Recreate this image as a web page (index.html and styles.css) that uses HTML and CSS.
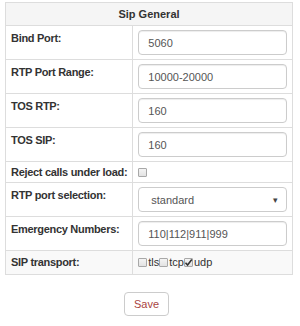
FILE: index.html
```html
<!DOCTYPE html>
<html lang="en">
<head>
  <meta charset="UTF-8">
  <meta name="viewport" content="width=device-width, initial-scale=1.0">
  <title>Sip General</title>
  <link rel="stylesheet" href="styles.css">
</head>
<body>
  <form class="sip-form">
    <table class="settings">
      <thead>
        <tr><th colspan="2">Sip General</th></tr>
      </thead>
      <tbody>
        <tr>
          <td class="label">Bind Port:</td>
          <td class="value"><input class="field" type="text" value="5060"></td>
        </tr>
        <tr>
          <td class="label">RTP Port Range:</td>
          <td class="value"><input class="field" type="text" value="10000-20000"></td>
        </tr>
        <tr>
          <td class="label">TOS RTP:</td>
          <td class="value"><input class="field" type="text" value="160"></td>
        </tr>
        <tr>
          <td class="label">TOS SIP:</td>
          <td class="value"><input class="field" type="text" value="160"></td>
        </tr>
        <tr class="short">
          <td class="label">Reject calls under load:</td>
          <td class="value"><span class="box"></span></td>
        </tr>
        <tr>
          <td class="label">RTP port selection:</td>
          <td class="value">
            <div class="select"><span>standard</span><span class="caret">&#9662;</span></div>
          </td>
        </tr>
        <tr>
          <td class="label">Emergency Numbers:</td>
          <td class="value"><input class="field" type="text" value="110|112|911|999"></td>
        </tr>
        <tr class="short shaded">
          <td class="label">SIP transport:</td>
          <td class="value transport">
            <span class="box"></span>tls<span class="box"></span>tcp<span class="box checked"><svg viewBox="0 0 9 9" width="9" height="9"><path d="M1.5 4.8 L3.6 7 L7.8 1.6" fill="none" stroke="#333" stroke-width="1.6"/></svg></span>udp
          </td>
        </tr>
      </tbody>
    </table>
    <div class="actions">
      <button type="button" class="save">Save</button>
    </div>
  </form>
</body>
</html>
```

FILE: styles.css
```css
html, body {
  margin: 0; padding: 0;
  background: #fff;
  font-family: "Liberation Sans", Arial, sans-serif;
  font-size: 11px;
  color: #333;
}
.sip-form {
  padding: 2px 7px 0 5px;
}
.settings {
  width: 288px;
  border-collapse: collapse;
  border: 1px solid #ddd;
}
.settings th {
  background: #f5f5f5;
  border: 1px solid #ddd;
  padding: 4px 5px;
  font-weight: bold;
  text-align: center;
  line-height: 14px;
}
.settings td {
  border: 1px solid #ddd;
  padding: 4px 5px;
  vertical-align: top;
}
.settings td.label {
  white-space: nowrap;
  font-weight: bold;
  letter-spacing: -0.3px;
  line-height: 14px;
  padding-top: 5px;
}
.settings td.value {
  width: 100%;
}
.settings tr.short td {
  padding-top: 4px;
  padding-bottom: 4px;
  line-height: 12px;
  vertical-align: middle;
}
.settings tr.shaded td {
  background: #f9f9f9;
  line-height: 15px;
}
.field {
  display: block;
  box-sizing: border-box;
  width: 100%;
  height: 25px;
  margin: 0;
  padding: 0 9px;
  border: 1px solid #ccc;
  border-radius: 4px;
  font-family: "Liberation Sans", Arial, sans-serif;
  font-size: 11px;
  color: #555;
  box-shadow: inset 0 1px 1px rgba(0,0,0,0.075);
}
.select {
  box-sizing: border-box;
  height: 25px;
  display: flex;
  align-items: center;
  justify-content: space-between;
  padding: 0 8px 0 12px;
  border: 1px solid #ccc;
  border-radius: 4px;
  color: #555;
}
.caret {
  font-size: 9px;
  color: #444;
}
.box {
  display: inline-block;
  box-sizing: border-box;
  width: 9px;
  height: 9px;
  border: 1px solid #a8a8a8;
  border-radius: 1px;
  background: linear-gradient(#f4f4f4, #e2e2e2);
  vertical-align: -1px;
  margin: 0 1px 0 0;
  position: relative;
}
.box.checked svg {
  position: absolute;
  left: -1px;
  top: -1px;
}
.transport {
  color: #333;
}
.actions {
  display: flex;
  justify-content: center;
  padding: 17px 10px 0 5px;
}
.save {
  height: 24px;
  padding: 0 9px;
  border: 1px solid #ccc;
  border-radius: 4px;
  background: #fff;
  color: #a94442;
  font-family: "Liberation Sans", Arial, sans-serif;
  font-size: 11px;
  cursor: pointer;
}
```
